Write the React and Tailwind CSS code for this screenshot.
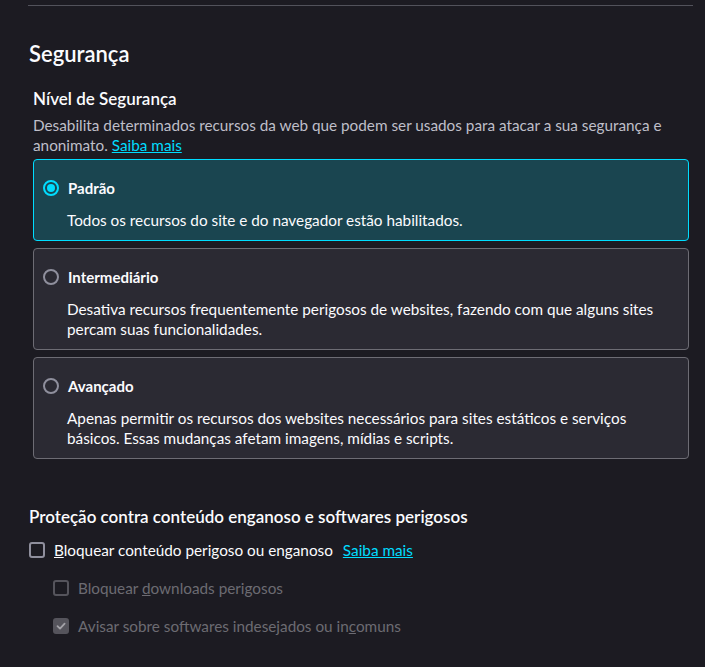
import React, { useState } from "react";

const levels = [
    {
        id: "padrao",
        label: "Padrão",
        desc: "Todos os recursos do site e do navegador estão habilitados.",
    },
    {
        id: "intermediario",
        label: "Intermediário",
        desc: "Desativa recursos frequentemente perigosos de websites, fazendo com que alguns sites percam suas funcionalidades.",
    },
    {
        id: "avancado",
        label: "Avançado",
        desc: "Apenas permitir os recursos dos websites necessários para sites estáticos e serviços básicos. Essas mudanças afetam imagens, mídias e scripts.",
    },
];

function Radio({ checked }) {
    return (
        <span
            className={`w-4 h-4 rounded-full border-2 flex items-center justify-center shrink-0 ${
                checked ? "border-[#00ddff]" : "border-[#8f8f9d]"
            }`}
        >
            {checked && <span className="w-2 h-2 rounded-full bg-[#00ddff]" />}
        </span>
    );
}

function Checkbox({ checked, disabled }) {
    return (
        <span
            className={`w-4 h-4 rounded-[3px] border-2 flex items-center justify-center shrink-0 ${
                disabled ? "border-[#55545c]" : "border-[#8f8f9d]"
            } ${checked ? "bg-[#55545c]" : ""}`}
        >
            {checked && (
                <svg width="10" height="10" viewBox="0 0 10 10" fill="none">
                    <path d="M1.5 5.2 L4 7.6 L8.6 2.6" stroke="#a3a2a8" strokeWidth="1.8" strokeLinecap="round" strokeLinejoin="round" />
                </svg>
            )}
        </span>
    );
}

export default function App() {
    const [level, setLevel] = useState("padrao");

    return (
        <div
            className="min-h-[667px] bg-[#1c1b22] text-[#fbfbfe] pl-[28px] pr-[12px] pt-[5px]"
            style={{ fontFamily: "Lato, 'Noto Sans', sans-serif" }}
        >
            <div className="border-t border-[#52525b]" />

            {/* Segurança */}
            <h1 className="text-[22px] font-semibold mt-[33px] leading-[30px] pl-px">Segurança</h1>

            <div className="pl-[5px] pr-[4px]">
                <h2 className="text-[17px] font-semibold mt-[18px] leading-[24px]">Nível de Segurança</h2>
                <p className="text-[15.3px] leading-[20px] text-[#bfbfc9] mt-[4px]">
                    Desabilita determinados recursos da web que podem ser usados para atacar a sua segurança e
                    anonimato. <a className="text-[#00ddff] underline" href="#">Saiba mais</a>
                </p>

                <div className="flex flex-col gap-[7px] mt-[4px]">
                    {levels.map((l) => {
                        const sel = level === l.id;
                        return (
                            <div
                                key={l.id}
                                onClick={() => setLevel(l.id)}
                                className={`rounded-[4px] border px-[9px] pt-[18px] pb-[10px] cursor-pointer ${
                                    sel ? "bg-[#1a4550] border-[#00ddff]" : "bg-[#2b2a33] border-[#6d6c74]"
                                }`}
                            >
                                <div className="flex items-center gap-[9px]">
                                    <Radio checked={sel} />
                                    <span className="text-[15px] font-bold leading-[20px]">{l.label}</span>
                                </div>
                                <p className="text-[15.3px] leading-[20px] mt-[12px] pl-[24px]">{l.desc}</p>
                            </div>
                        );
                    })}
                </div>
            </div>

            {/* Proteção */}
            <h2 className="text-[17px] font-semibold mt-[46px] leading-[24px] pl-px">
                Proteção contra conteúdo enganoso e softwares perigosos
            </h2>
            <div className="flex flex-col mt-[11px]">
                <label className="flex items-center gap-[9px] h-[20px] pl-px text-[15.3px]">
                    <Checkbox />
                    <span>
                        <span className="underline">B</span>loquear conteúdo perigoso ou enganoso
                    </span>
                    <a className="text-[#00ddff] underline ml-[1px]" href="#">Saiba mais</a>
                </label>
                <label className="flex items-center gap-[9px] h-[20px] pl-[25px] mt-[18px] text-[15.3px] text-[#6c6b72]">
                    <Checkbox disabled />
                    <span>
                        Bloquear <span className="underline">d</span>ownloads perigosos
                    </span>
                </label>
                <label className="flex items-center gap-[9px] h-[20px] pl-[25px] mt-[18px] text-[15.3px] text-[#6c6b72]">
                    <Checkbox checked disabled />
                    <span>
                        Avisar sobre softwares indesejados ou in<span className="underline">c</span>omuns
                    </span>
                </label>
            </div>
        </div>
    );
}
